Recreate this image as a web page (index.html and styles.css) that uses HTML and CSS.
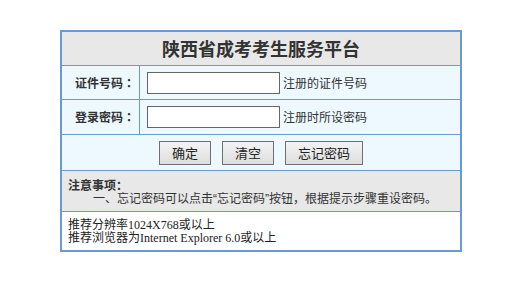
FILE: index.html
```html
<!DOCTYPE html>
<html lang="zh-CN">
<head>
<meta charset="utf-8">
<title>陕西省成考考生服务平台</title>
<link rel="stylesheet" href="styles.css">
</head>
<body>
<div class="panel">
  <div class="title">陕西省成考考生服务平台</div>
  <div class="field">
    <div class="label">证件号码<span class="punct">：</span></div>
    <div class="control"><input class="text" type="text"><span class="hint">注册的证件号码</span></div>
  </div>
  <div class="field field-2">
    <div class="label">登录密码<span class="punct">：</span></div>
    <div class="control"><input class="text" type="password"><span class="hint">注册时所设密码</span></div>
  </div>
  <div class="actions">
    <button class="btn" type="button">确定</button>
    <button class="btn" type="button">清空</button>
    <button class="btn" type="button">忘记密码</button>
  </div>
  <div class="notice">
    <div class="notice-title">注意事项<span class="punct">：</span></div>
    <div class="notice-item">一、忘记密码可以点击<span class="quote">“</span>忘记密码<span class="quote">”</span>按钮<span class="punct">，</span>根据提示步骤重设密码。</div>
  </div>
  <div class="footer">
    <div>推荐分辨率1024X768或以上</div>
    <div>推荐浏览器为Internet Explorer 6.0或以上</div>
  </div>
</div>
</body>
</html>
```
FILE: styles.css
```css
* { box-sizing: border-box; }
html, body { margin: 0; padding: 0; background: #fff; }
body {
  font-family: "Noto Sans CJK SC", "Liberation Sans", sans-serif;
  font-size: 12px;
  color: #333;
}
.panel {
  margin: 30px 0 0 60px;
  width: 402px;
  border: 2px solid #6a9ad3;
}
.title {
  height: 34px;
  line-height: 33px;
  background: #e8e8e8;
  border-bottom: 1px solid #6a9ad3;
  text-align: center;
  font-size: 18px;
  font-weight: bold;
  color: #333;
}
.field {
  display: grid;
  grid-template-columns: 78px 1fr;
  height: 34px;
  background: #eef9ff;
  border-bottom: 1px solid #6a9ad3;
}
.field-2 { height: 35px; }
.label {
  border-right: 1px solid #6a9ad3;
  display: flex;
  align-items: center;
  padding-left: 13px;
  font-weight: bold;
  line-height: 14px;
}
.punct { font-family: "Noto Sans CJK TC", "Noto Sans CJK SC", sans-serif; }
.quote { font-family: "Liberation Sans", sans-serif; }
.control {
  display: flex;
  align-items: center;
  padding-left: 7px;
  line-height: 14px;
}
.text {
  width: 133px;
  height: 22px;
  margin: 0 3px 0 0;
  padding: 0 2px;
  border: 1px solid #666;
  background: #fff;
  font: inherit;
}
.hint { color: #333; }
.actions {
  height: 36px;
  background: #eef9ff;
  border-bottom: 1px solid #6a9ad3;
  display: flex;
  justify-content: center;
  align-items: center;
  gap: 11px;
  padding-top: 1px;
}
.btn {
  height: 24px;
  padding: 0 12px;
  margin: 0;
  border: 1px solid #707070;
  border-radius: 0;
  background: linear-gradient(#f3f3f3, #dedede);
  font-family: "Noto Sans CJK SC", sans-serif;
  font-size: 13px;
  line-height: 20px;
  color: #222;
}
.notice {
  height: 41px;
  background: #e8e8e8;
  border-bottom: 1px solid #6a9ad3;
  padding: 7px 6px 0 6px;
  line-height: 13px;
}
.notice-title { font-weight: bold; }
.notice-item { padding-left: 25px; }
.footer {
  height: 38px;
  background: #fff;
  padding: 7px 6px 0 6px;
  line-height: 13px;
  font-family: "Liberation Serif", "Noto Sans CJK SC", serif;
  color: #222;
}
```
